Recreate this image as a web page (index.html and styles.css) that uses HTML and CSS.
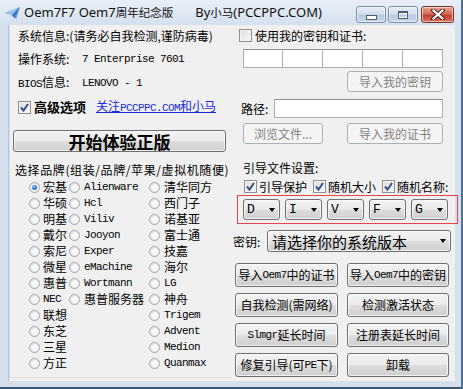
FILE: index.html
```html
<!DOCTYPE html>
<html>
<head>
<meta charset="utf-8">
<link rel="stylesheet" href="styles.css">
</head>
<body>
<div class="window">
  <div class="titlebar">
    <svg class="app-icon" width="16" height="12" viewBox="0 0 16 12">
      <polygon points="0,6 15,0 11,12 7,8" fill="#5b8fd6"/>
      <polygon points="0,6 15,0 7,8" fill="#9cc3f0"/>
      <polygon points="7,8 15,0 9,11" fill="#3f72c0"/>
    </svg>
    <span class="title">Oem7F7 Oem7<span class="tcjk">周年纪念版</span></span>
    <span class="title by">By<span class="tcjk">小马</span>(PCCPPC.COM)</span>
    <div class="caption-btns">
      <div class="cbtn min"><span class="glyph-min"></span></div>
      <div class="cbtn max"><span class="glyph-max"></span></div>
      <div class="cbtn close">
        <svg width="14" height="11" viewBox="0 0 14 11">
          <path d="M2 1 L12 10 M12 1 L2 10" stroke="#5a1e18" stroke-width="4" stroke-linecap="square"/>
          <path d="M2.5 1.5 L11.5 9.5 M11.5 1.5 L2.5 9.5" stroke="#ffffff" stroke-width="2.2" stroke-linecap="square"/>
        </svg>
      </div>
    </div>
  </div>

  <div class="client">
    <div class="left">
      <div class="info first">系统信息:(请务必自我检测,谨防病毒)</div>
      <div class="info"><span class="lbl">操作系统:</span><span class="en">7 Enterprise 7601</span></div>
      <div class="info"><span class="lbl"><span class="en">BIOS</span>信息:</span><span class="en">LENOVO - 1</span></div>
      <div class="info adv">
        <span class="chk on"><svg viewBox="0 0 13 13" width="13" height="13"><path d="M3 6.5 L5.5 9.5 L10 3" stroke="#3c4f86" stroke-width="2" fill="none"/></svg></span>
        <b class="adv-lbl">高级选项</b>
        <span class="link">关注<span class="en">PCCPPC.COM</span>和小马</span>
      </div>
      <div class="btn big-btn">开始体验正版</div>
      <div class="brand-title">选择品牌(组装/品牌/苹果/虚拟机随便)</div>
      <div class="brands">
        <div class="opt"><span class="radio on"></span>宏基</div>
        <div class="opt"><span class="radio"></span><span class="en">Alienware</span></div>
        <div class="opt"><span class="radio"></span>清华同方</div>

        <div class="opt"><span class="radio"></span>华硕</div>
        <div class="opt"><span class="radio"></span><span class="en">Hcl</span></div>
        <div class="opt"><span class="radio"></span>西门子</div>

        <div class="opt"><span class="radio"></span>明基</div>
        <div class="opt"><span class="radio"></span><span class="en">Viliv</span></div>
        <div class="opt"><span class="radio"></span>诺基亚</div>

        <div class="opt"><span class="radio"></span>戴尔</div>
        <div class="opt"><span class="radio"></span><span class="en">Jooyon</span></div>
        <div class="opt"><span class="radio"></span>富士通</div>

        <div class="opt"><span class="radio"></span>索尼</div>
        <div class="opt"><span class="radio"></span><span class="en">Exper</span></div>
        <div class="opt"><span class="radio"></span>技嘉</div>

        <div class="opt"><span class="radio"></span>微星</div>
        <div class="opt"><span class="radio"></span><span class="en">eMachine</span></div>
        <div class="opt"><span class="radio"></span>海尔</div>

        <div class="opt"><span class="radio"></span>惠普</div>
        <div class="opt"><span class="radio"></span><span class="en">Wortmann</span></div>
        <div class="opt"><span class="radio"></span><span class="en">LG</span></div>

        <div class="opt"><span class="radio"></span><span class="en">NEC</span></div>
        <div class="opt"><span class="radio"></span>惠普服务器</div>
        <div class="opt"><span class="radio"></span>神舟</div>

        <div class="opt"><span class="radio"></span>联想</div>
        <div class="opt"></div>
        <div class="opt"><span class="radio"></span><span class="en">Trigem</span></div>

        <div class="opt"><span class="radio"></span>东芝</div>
        <div class="opt"></div>
        <div class="opt"><span class="radio"></span><span class="en">Advent</span></div>

        <div class="opt"><span class="radio"></span>三星</div>
        <div class="opt"></div>
        <div class="opt"><span class="radio"></span><span class="en">Medion</span></div>

        <div class="opt"><span class="radio"></span>方正</div>
        <div class="opt"></div>
        <div class="opt"><span class="radio"></span><span class="en">Quanmax</span></div>
      </div>
    </div>

    <div class="right">
      <div class="row use-own"><span class="chk"></span><span>使用我的密钥和证书:</span></div>
      <div class="keyboxes">
        <div class="tb"></div><div class="tb"></div><div class="tb"></div><div class="tb"></div><div class="tb"></div>
      </div>
      <div class="row r-btn1"><div class="btn disabled w96">导入我的密钥</div></div>
      <div class="row path-row"><span class="path-lbl">路径:</span><div class="tb path-tb"></div></div>
      <div class="row r-btn2"><div class="btn disabled w80">浏览文件...</div><div class="btn disabled w96">导入我的证书</div></div>
      <div class="row boot-title">引导文件设置:</div>
      <div class="row boot-opts">
        <span class="chk on"><svg viewBox="0 0 13 13" width="13" height="13"><path d="M3 6.5 L5.5 9.5 L10 3" stroke="#3c4f86" stroke-width="2" fill="none"/></svg></span><span class="bo-lbl">引导保护</span>
        <span class="chk on"><svg viewBox="0 0 13 13" width="13" height="13"><path d="M3 6.5 L5.5 9.5 L10 3" stroke="#3c4f86" stroke-width="2" fill="none"/></svg></span><span class="bo-lbl">随机大小</span>
        <span class="chk on"><svg viewBox="0 0 13 13" width="13" height="13"><path d="M3 6.5 L5.5 9.5 L10 3" stroke="#3c4f86" stroke-width="2" fill="none"/></svg></span><span class="bo-lbl">随机名称:</span>
      </div>
      <div class="drives">
        <div class="dd"><span class="dl">D</span><span class="arrow"></span></div>
        <div class="dd"><span class="dl">I</span><span class="arrow"></span></div>
        <div class="dd"><span class="dl">V</span><span class="arrow"></span></div>
        <div class="dd"><span class="dl">F</span><span class="arrow"></span></div>
        <div class="dd"><span class="dl">G</span><span class="arrow"></span></div>
      </div>
      <div class="row key-row"><span class="key-lbl">密钥:</span><div class="combo"><span>请选择你的系统版本</span><span class="arrow"></span></div></div>
      <div class="actions">
        <div class="btn">导入<span class="en">Oem7</span>中的证书</div>
        <div class="btn">导入<span class="en">Oem7</span>中的密钥</div>
        <div class="btn">自我检测(需网络)</div>
        <div class="btn">检测激活状态</div>
        <div class="btn"><span class="en">Slmgr</span>延长时间</div>
        <div class="btn">注册表延长时间</div>
        <div class="btn">修复引导(可<span class="en">PE</span>下)</div>
        <div class="btn">卸载</div>
      </div>
    </div>
  </div>
</div>
</body>
</html>
```

FILE: styles.css
```css
* { box-sizing: border-box; }
html, body { margin: 0; padding: 0; }
body {
  width: 463px;
  height: 389px;
  overflow: hidden;
  font-family: "Noto Sans CJK SC", sans-serif;
  font-size: 12px;
  color: #000;
  background: #fff;
}
.en {
  font-family: "Liberation Mono", monospace;
  font-size: 11px;
  letter-spacing: -0.6px;
}

.window {
  width: 463px;
  height: 389px;
  background: #d4e0ee;
  border-right: 2px solid #54708f;
  border-bottom: 2px solid #3b566f;
  display: flex;
  flex-direction: column;
}

/* ---------- title bar ---------- */
.titlebar {
  height: 25px;
  flex: none;
  display: flex;
  align-items: center;
  position: relative;
  background: linear-gradient(#e9eff7, #d4e0ee);
}
.app-icon { margin-left: 5px; margin-right: 3px; flex: none; }
.title {
  font-family: "Noto Sans", "Noto Sans CJK SC", sans-serif;
  font-size: 13px;
  line-height: 25px;
  color: #111;
}
.tcjk { font-family: "Noto Sans CJK SC", sans-serif; font-size: 11.5px; }
.by { margin-left: 22px; }
.caption-btns {
  position: absolute;
  top: 6px;
  right: 7px;
  display: flex;
  gap: 2px;
}
.cbtn {
  height: 17px;
  border: 1px solid #7d8ea6;
  border-radius: 3px;
  display: flex;
  align-items: center;
  justify-content: center;
  box-shadow: inset 0 0 0 1px rgba(255,255,255,0.55);
}
.min, .max {
  width: 30px;
  background: linear-gradient(#e6edf6 0%, #d3dfed 45%, #b9cbe2 55%, #c8d8ec 100%);
}
.close {
  width: 33px;
  margin-left: 1px;
  border-color: #7c3128;
  background: linear-gradient(#e6a493 0%, #d26d5c 45%, #c2402f 55%, #d8705c 100%);
}
.glyph-min {
  width: 11px;
  height: 5px;
  margin-top: 5px;
  border: 1px solid #4c5d74;
  background: #fff;
}
.glyph-max {
  width: 10px;
  height: 8px;
  border: 1px solid #4c5d74;
  border-top-width: 2px;
  background: transparent;
  box-shadow: inset 0 0 0 1px #fff;
}

/* ---------- client ---------- */
.client {
  flex: none;
  height: 356px;
  margin: 0 8px 0 8px;
  width: 447px;
  background: #f0f0f0;
  display: flex;
  border-left: 1px solid #b7c7da;
}
.left {
  width: 223px;
  flex: none;
  padding-left: 8px;
  border-left: 1px solid #dcdcdc;
  border-bottom: 1px solid #dcdcdc;
  margin-bottom: 3px;
}
.right {
  width: 223px;
  flex: none;
  padding-left: 7px;
  position: relative;
}

/* left column */
.info {
  height: 24px;
  line-height: 24px;
  white-space: nowrap;
  display: flex;
  align-items: center;
}
.info.first { height: 22px; line-height: 22px; }
.lbl { display: inline-block; width: 64px; }
.adv { gap: 0; }
.adv-lbl { font-size: 13px; margin-left: 3px; font-weight: 700; }
.link {
  margin-left: 10px;
  color: #1a2bd8;
  text-decoration: underline;
}

.chk {
  width: 13px;
  height: 13px;
  flex: none;
  display: inline-block;
  border: 1px solid #8e8f8f;
  background: linear-gradient(135deg, #dcdcdc, #fbfbfb);
  box-shadow: inset 0 0 0 1px #f4f4f4;
  position: relative;
}
.chk svg { position: absolute; left: -1px; top: -1px; }

.btn {
  height: 22px;
  border: 1px solid #707070;
  border-radius: 3px;
  background: linear-gradient(#f2f2f2 0%, #ebebeb 48%, #dddddd 52%, #cfcfcf 100%);
  box-shadow: inset 0 0 0 1px rgba(255,255,255,0.7);
  display: flex;
  align-items: center;
  justify-content: center;
  white-space: nowrap;
  line-height: 1;
}
.btn.disabled {
  border-color: #adb2b5;
  background: #f4f4f4;
  color: #838383;
  box-shadow: none;
}
.big-btn {
  margin-top: 11px;
  margin-left: -5px;
  width: 213px;
  height: 22px;
  font-size: 17px;
  font-weight: 700;
}
.brand-title {
  margin-left: -3px;
  height: 27px;
  line-height: 27px;
  padding-top: 4px;
  letter-spacing: 0.6px;
  white-space: nowrap;
}
.brands {
  margin-left: 11px;
  display: grid;
  grid-template-columns: 40px 80px 1fr;
  grid-auto-rows: 16px;
}
.opt {
  display: flex;
  align-items: center;
  white-space: nowrap;
  font-size: 12px;
  line-height: 16px;
}
.opt:nth-child(3n+1) .radio { margin-right: 3px; }
.radio {
  width: 11px;
  height: 11px;
  flex: none;
  border-radius: 50%;
  border: 1px solid #a3a7ab;
  background: radial-gradient(circle at 55% 55%, #ffffff 0%, #f2f2f2 45%, #d6d8da 100%);
  margin-right: 4px;
  position: relative;
}
.radio.on::after {
  content: "";
  position: absolute;
  left: 2px; top: 2px;
  width: 5px; height: 5px;
  border-radius: 50%;
  background: radial-gradient(circle at 40% 35%, #8fc3f2 0%, #2b6fc3 60%, #1b4f94 100%);
}

/* right column */
.row { display: flex; align-items: center; white-space: nowrap; }
.use-own { height: 20px; gap: 3px; }
.keyboxes {
  margin-top: 4px;
  margin-left: 4px;
  display: flex;
  width: 200px;
  height: 19px;
}
.tb {
  background: #fff;
  border: 1px solid #abadb3;
  border-top-color: #8c9096;
}
.keyboxes .tb { width: 40px; height: 19px; }
.keyboxes .tb + .tb { border-left: none; }
.r-btn1 { margin-top: 3px; padding-left: 108px; }
.w96 { width: 96px; height: 21px; }
.w80 { width: 80px; height: 21px; }
.path-row { margin-top: 7px; height: 19px; }
.path-lbl { margin-left: 2px; width: 33px; }
.path-tb { width: 169px; height: 19px; }
.r-btn2 { margin-top: 5px; padding-left: 4px; gap: 24px; }
.boot-title { margin-top: 13px; margin-left: 4px; height: 20px; }
.boot-opts { height: 18px; padding-left: 5px; }
.bo-lbl { margin-left: 2px; margin-right: 6px; }
.drives {
  margin-left: -2px;
  width: 221px;
  height: 29px;
  border: 1px solid #e04848;
  display: flex;
  align-items: center;
  padding-left: 5px;
  gap: 5px;
}
.dd {
  width: 37px;
  height: 21px;
  border: 1px solid #707070;
  border-radius: 3px;
  background: linear-gradient(#f2f2f2 0%, #ebebeb 48%, #dddddd 52%, #cfcfcf 100%);
  box-shadow: inset 0 0 0 1px rgba(255,255,255,0.7);
  display: flex;
  align-items: center;
  justify-content: space-between;
  padding: 0 4px 0 3px;
}
.dl { font-family: "Liberation Mono", monospace; font-size: 13px; }
.arrow {
  width: 0; height: 0;
  border-left: 3.5px solid transparent;
  border-right: 3.5px solid transparent;
  border-top: 4px solid #000;
}
.key-row { margin-top: 6px; height: 22px; margin-left: -6px; }
.key-lbl { width: 34px; }
.combo {
  width: 184px;
  height: 22px;
  border: 1px solid #707070;
  border-radius: 3px;
  background: linear-gradient(#f2f2f2 0%, #ebebeb 48%, #dddddd 52%, #cfcfcf 100%);
  box-shadow: inset 0 0 0 1px rgba(255,255,255,0.7);
  display: flex;
  align-items: center;
  justify-content: space-between;
  padding: 0 4px 0 4px;
  font-size: 15px;
}
.actions {
  margin-top: 11px;
  margin-left: -4px;
  display: grid;
  grid-template-columns: 103px 102px;
  column-gap: 9px;
  row-gap: 6px;
}
.actions .btn { height: 24px; }
```
